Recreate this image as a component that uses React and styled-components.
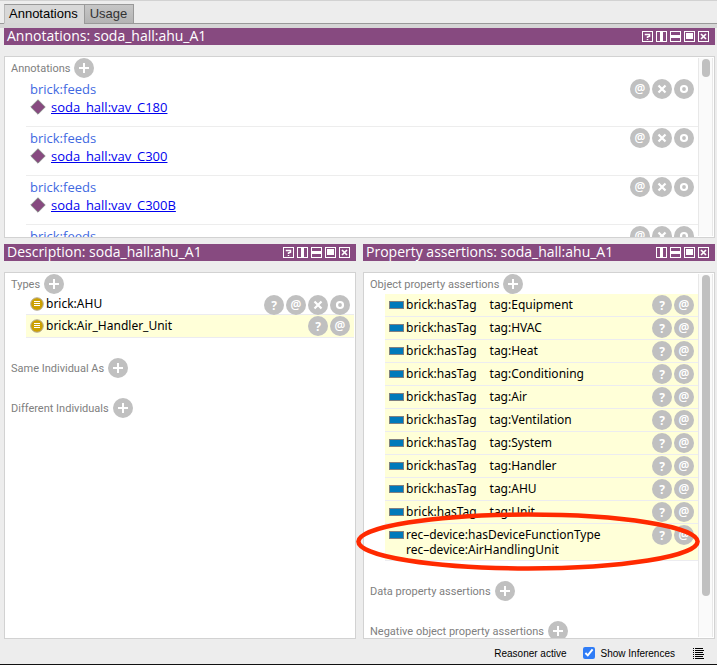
import React from "react";
import styled, { createGlobalStyle } from "styled-components";

const PURPLE = "#874a80";
const GREY = "#c0c0c0";

const GlobalStyle = createGlobalStyle`
  *, *::before, *::after { box-sizing: border-box; }
  body {
    margin: 0;
    background: #ededed;
    font-family: "Noto Sans", "Open Sans", sans-serif;
    font-size: 12px;
    color: #000;
  }
  button { border: 0; padding: 0; font: inherit; cursor: pointer; }
  h2, h3, ul { margin: 0; padding: 0; font: inherit; list-style: none; }
`;

const Window = styled.div`
  display: flex;
  flex-direction: column;
  height: 100vh;
  overflow: hidden;
  border-top: 1px solid #d2d2d2;
`;

const TabBar = styled.div`
  display: flex;
  padding: 3px 4px 0;
  height: 27px;
  border-bottom: 4px solid #d6d6d6;
  box-shadow: inset 0 -1px 0 #999;
  flex: none;
`;

const Tab = styled.button`
  height: 20px;
  padding: ${(p) => (p.$active ? "0 6px 0 4px" : "0 6px 0 5px")};
  border: 1px solid #999;
  border-left-color: ${(p) => (p.$active ? "#bbb" : "#999")};
  border-bottom-color: ${(p) => (p.$active ? "#d6d6d6" : "#999")};
  border-right-width: ${(p) => (p.$active ? 0 : 1)}px;
  background: ${(p) => (p.$active ? "#d8d8d8" : "linear-gradient(#c6c6c6, #b4b4b4)")};
  color: ${(p) => (p.$active ? "#000" : "#333")};
  font-family: "Liberation Sans", Arial, sans-serif;
  font-size: 13px;
  line-height: 18px;
`;

const Workspace = styled.main`
  flex: 1;
  min-height: 0;
  display: grid;
  grid-template-rows: minmax(0, 42fr) minmax(0, 79fr);
  gap: 6px;
  padding: 0 2px 0 4px;
`;

const Split = styled.div`
  display: grid;
  grid-template-columns: 1fr 1fr;
  gap: 7px;
  min-height: 0;
`;

const View = styled.section`
  position: relative;
  display: flex;
  flex-direction: column;
  gap: 11px;
  min-width: 0;
  min-height: 0;
`;

const TitleBar = styled.header`
  display: flex;
  align-items: center;
  justify-content: space-between;
  flex: none;
  height: 17px;
  padding: 0 6px 0 3px;
  background: ${PURPLE};
  color: #fff;
`;

const Title = styled.h2`
  font-family: "Open Sans", "Noto Sans", sans-serif;
  font-size: 14px;
  line-height: 15px;
  padding-bottom: 2px;
  white-space: nowrap;
`;

const ViewControls = styled.div`
  display: flex;
  gap: 3px;
`;

const ControlButton = styled.button`
  display: block;
  width: 11px;
  height: 11px;
  background: none;
  svg { display: block; }
`;

const Panel = styled.div`
  flex: 1;
  min-height: 0;
  display: flex;
  border: 1px solid #d2d2d2;
  background: #fff;
  overflow: hidden;
`;

const PanelBody = styled.div`
  flex: 1;
  min-width: 0;
  overflow: hidden;
  padding: 1px ${(p) => (p.$scroll ? 0 : 1)}px 0 0;
`;

const Track = styled.div`
  width: 15px;
  margin: 1px 1px 1px 0;
  padding: 1px 3px;
  border: solid #e8e8e8;
  border-width: 0 1px;
  background: #fafafa;
`;

const Thumb = styled.div`
  width: 8px;
  height: ${(p) => p.$size}%;
  border-radius: 4px;
  background: ${GREY};
`;

const SectionHead = styled.h3`
  display: flex;
  align-items: center;
  gap: 4px;
  height: 20px;
  padding-left: 6px;
  margin-bottom: ${(p) => p.$space || 0}px;
  font-family: Roboto, "Noto Sans", sans-serif;
  font-size: 11px;
  color: #808080;
  white-space: nowrap;
`;

const Round = styled.button`
  display: block;
  flex: none;
  width: 20px;
  height: 20px;
  padding-top: ${(p) => (p.$bold ? 1 : 0)}px;
  border-radius: 50%;
  background: ${GREY};
  color: #fff;
  font-family: "Noto Sans", "Open Sans", sans-serif;
  font-size: 12px;
  font-weight: ${(p) => (p.$bold ? 700 : 600)};
  line-height: 20px;
  text-align: center;
  svg { display: block; }
`;

const Actions = styled.div`
  display: flex;
  gap: 2px;
  flex: none;
`;

const AnnotationRow = styled.li`
  display: flex;
  justify-content: space-between;
  align-items: flex-start;
  height: 49px;
  margin-left: 21px;
  padding: 1px 4px 0;
  border-bottom: 1px solid #ededed;
  font-family: "Open Sans", "Noto Sans", sans-serif;
  font-size: 13px;
`;

const Property = styled.div`
  padding-top: 1px;
  line-height: 18px;
  color: #4169e1;
`;

const ValueLine = styled.div`
  display: flex;
  align-items: center;
  gap: 5px;
  line-height: 18px;
  a { color: #0000ee; }
`;

const AxiomRow = styled.li`
  display: flex;
  justify-content: space-between;
  align-items: flex-start;
  height: ${(p) => p.$height || 23}px;
  margin-left: 21px;
  padding: 1px 4px 0;
  border-bottom: 1px solid #ececf0;
  background: ${(p) => (p.$inferred ? "#ffffd8" : "#fff")};
`;

const Axiom = styled.div`
  display: flex;
  align-items: flex-start;
  gap: 2px;
  svg { display: block; flex: none; margin-top: ${(p) => p.$iconTop}px; }
`;

const AxiomText = styled.div`
  display: flex;
  flex-wrap: wrap;
  column-gap: 13px;
  padding-top: ${(p) => p.$top ?? 2}px;
  line-height: 15px;
  white-space: pre;
`;

const AxiomList = styled.ul`
  margin-bottom: ${(p) => p.$space}px;
`;

const Ring = styled.svg`
  position: absolute;
  left: -7px;
  top: 267px;
  width: calc(100% - 8px);
  height: 61px;
  overflow: visible;
  pointer-events: none;
`;

const StatusBar = styled.footer`
  display: flex;
  align-items: center;
  justify-content: flex-end;
  flex: none;
  height: 26px;
  padding: 3px 12px 0 0;
  border-bottom: 1px solid #111;
  font-family: "Liberation Sans", Arial, sans-serif;
  font-size: 10px;
`;

const InferenceToggle = styled.label`
  display: flex;
  align-items: center;
  gap: 6px;
  margin: 0 18px 0 16px;
  input { width: 12px; height: 12px; margin: 0; accent-color: #2f7cf6; }
`;

const LogButton = styled.button`
  background: none;
  svg { display: block; }
`;

const controlShapes = {
  help: <path d="M3.5 4.2V3.5H7.5V5.2L5.5 6V7M5.5 8v1" stroke="#fff" strokeWidth="1.5" fill="none" />,
  "split vertically": <path d="M4 1h3v9H4z" fill="#fff" />,
  "split horizontally": <path d="M1 4h9v3H1z" fill="#fff" />,
  float: <path d="M2 2h7v6H2z" fill="#fff" />,
  close: <path d="M3 3l5 5M8 3l-5 5" stroke="#fff" strokeWidth="1.7" />,
};

function Controls({ help }) {
  const names = Object.keys(controlShapes).filter((n) => help || n !== "help");
  return (
    <ViewControls>
      {names.map((n) => (
        <ControlButton key={n} aria-label={n}>
          <svg width="11" height="11" viewBox="0 0 11 11">
            <rect x=".5" y=".5" width="10" height="10" fill="none" stroke="#fff" />
            {controlShapes[n]}
          </svg>
        </ControlButton>
      ))}
    </ViewControls>
  );
}

function RoundAction({ kind }) {
  if (kind === "help") return <Round $bold aria-label="Explain">?</Round>;
  if (kind === "annotate") return <Round aria-label="Annotate">@</Round>;
  return (
    <Round aria-label={kind}>
      <svg width="20" height="20" viewBox="0 0 20 20" fill="none" stroke="#fff">
        {kind === "add" && <path d="M5 10h10M10 5v10" strokeWidth="2" />}
        {kind === "delete" && <path d="M6.5 6.5l7 7M13.5 6.5l-7 7" strokeWidth="2.2" />}
        {kind === "edit" && <circle cx="10" cy="10" r="3" strokeWidth="2.2" />}
      </svg>
    </Round>
  );
}

const ActionSet = ({ kinds }) => (
  <Actions>{kinds.map((k) => <RoundAction key={k} kind={k} />)}</Actions>
);

const Heading = ({ children, space }) => (
  <SectionHead $space={space}>
    {children}
    <RoundAction kind="add" />
  </SectionHead>
);

const Scrollbar = ({ size }) => (
  <Track>
    <Thumb $size={size} />
  </Track>
);

const IndividualIcon = () => (
  <svg width="16" height="16" viewBox="0 0 16 16">
    <path d="M8 .8L15.2 8 8 15.2.8 8z" fill={PURPLE} stroke="#888" />
  </svg>
);

const ClassIcon = () => (
  <svg width="14" height="14" viewBox="0 0 14 14">
    <circle cx="7" cy="7" r="6.3" fill="#cca000" stroke="#b8b0a0" />
    <path d="M4 4.5h6M4 6.5h6M4 8.5h6" stroke="#fff" />
  </svg>
);

const PropertyIcon = () => (
  <svg width="15" height="8" viewBox="0 0 15 8">
    <rect x=".5" y=".5" width="14" height="7" fill="#0079ba" stroke="#808080" />
  </svg>
);

const feeds = ["soda_hall:vav_C180", "soda_hall:vav_C300", "soda_hall:vav_C300B", "soda_hall:vav_C301"];
const tags = ["Equipment", "HVAC", "Heat", "Conditioning", "Air", "Ventilation", "System", "Handler", "AHU", "Unit"];

export default function App() {
  return (
    <Window>
      <GlobalStyle />
      <TabBar role="tablist">
        <Tab $active role="tab" aria-selected="true">Annotations</Tab>
        <Tab role="tab" aria-selected="false">Usage</Tab>
      </TabBar>
      <Workspace>
        <View>
          <TitleBar>
            <Title>Annotations: soda_hall:ahu_A1</Title>
            <Controls help />
          </TitleBar>
          <Panel>
            <PanelBody $scroll>
              <Heading>Annotations</Heading>
              <ul>
                {feeds.map((f, i) => (
                  <AnnotationRow key={f}>
                    <div>
                      <Property>brick:feeds</Property>
                      {i < 3 && (
                        <ValueLine>
                          <IndividualIcon />
                          <a href={"#" + f}>{f}</a>
                        </ValueLine>
                      )}
                    </div>
                    <ActionSet kinds={["annotate", "delete", "edit"]} />
                  </AnnotationRow>
                ))}
              </ul>
            </PanelBody>
            <Scrollbar size={10} />
          </Panel>
        </View>
        <Split>
          <View>
            <TitleBar>
              <Title>Description: soda_hall:ahu_A1</Title>
              <Controls help />
            </TitleBar>
            <Panel>
              <PanelBody>
                <Heading>Types</Heading>
                <AxiomList $space={20}>
                  <AxiomRow $height={21}>
                    <Axiom $iconTop={2}>
                      <ClassIcon />
                      <AxiomText $top={1}>brick:AHU</AxiomText>
                    </Axiom>
                    <ActionSet kinds={["help", "annotate", "delete", "edit"]} />
                  </AxiomRow>
                  <AxiomRow $inferred>
                    <Axiom $iconTop={3}>
                      <ClassIcon />
                      <AxiomText>brick:Air_Handler_Unit</AxiomText>
                    </Axiom>
                    <ActionSet kinds={["help", "annotate"]} />
                  </AxiomRow>
                </AxiomList>
                <Heading space={20}>Same Individual As</Heading>
                <Heading>Different Individuals</Heading>
              </PanelBody>
            </Panel>
          </View>
          <View>
            <TitleBar>
              <Title>Property assertions: soda_hall:ahu_A1</Title>
              <Controls />
            </TitleBar>
            <Panel>
              <PanelBody $scroll>
                <Heading>Object property assertions</Heading>
                <AxiomList $space={20}>
                  {tags.map((t) => (
                    <AxiomRow key={t} $inferred>
                      <Axiom $iconTop={6}>
                        <PropertyIcon />
                        <AxiomText>
                          <span>brick:hasTag</span>
                          <span>{"tag:" + t}</span>
                        </AxiomText>
                      </Axiom>
                      <ActionSet kinds={["help", "annotate"]} />
                    </AxiomRow>
                  ))}
                  <AxiomRow $inferred $height={37}>
                    <Axiom $iconTop={6}>
                      <PropertyIcon />
                      <AxiomText>{"rec–device:hasDeviceFunctionType\nrec–device:AirHandlingUnit"}</AxiomText>
                    </Axiom>
                    <ActionSet kinds={["help", "annotate"]} />
                  </AxiomRow>
                </AxiomList>
                <Heading space={20}>Data property assertions</Heading>
                <Heading>Negative object property assertions</Heading>
              </PanelBody>
              <Scrollbar size={89} />
            </Panel>
            <Ring aria-hidden="true">
              <ellipse cx="50%" cy="50%" rx="49.3%" ry="27" fill="none" stroke="#ff2a00" strokeWidth="4.5" />
            </Ring>
          </View>
        </Split>
      </Workspace>
      <StatusBar>
        <span>Reasoner active</span>
        <InferenceToggle>
          <input type="checkbox" defaultChecked />
          Show Inferences
        </InferenceToggle>
        <LogButton aria-label="Show log">
          <svg width="12" height="13" viewBox="0 0 12 13">
            <path d="M0 1.5h1M2 1.5h8M0 3.5h1M2 3.5h9M0 5.5h1M2 5.5h8M0 7.5h1M2 7.5h9M0 9.5h1M2 9.5h8M0 11.5h1M2 11.5h9" stroke="#000" />
          </svg>
        </LogButton>
      </StatusBar>
    </Window>
  );
}
